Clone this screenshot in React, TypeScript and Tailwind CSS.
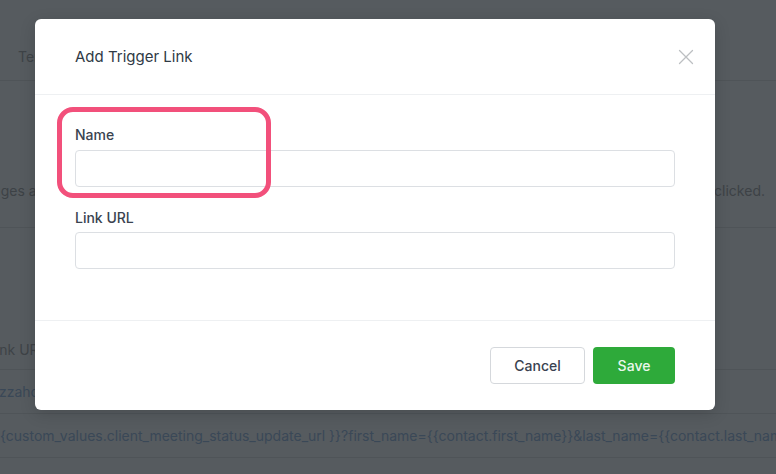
import { useState } from "react";

const linkRows = [
  { url: "pizzahouse.com/order", offset: "-ml-[13px]" },
  {
    url: "{custom_values.client_meeting_status_update_url }}?first_name={{contact.first_name}}&last_name={{contact.last_name}}",
    offset: "",
  },
];

function CloseIcon() {
  return (
    <svg width="16" height="16" viewBox="0 0 16 16" fill="none" stroke="currentColor" strokeWidth="1.3" strokeLinecap="round">
      <path d="M1.5 1.5 L14.5 14.5 M14.5 1.5 L1.5 14.5" />
    </svg>
  );
}

export default function App() {
  const [name, setName] = useState("");
  const [url, setUrl] = useState("");

  return (
    <div className="relative w-[776px] h-[474px] overflow-hidden bg-[#565b5f] font-['Inter',sans-serif] text-[#3e4347]">
      {/* Page behind the dialog (dimmed) */}
      <div className="flex flex-col h-full">
        <div className="h-[81px] border-b border-[#4f5458] flex items-end px-[18px] pb-[13px]">
          <span className="text-sm">Templates</span>
        </div>
        <div className="h-[147px] border-b border-[#4f5458] flex items-end justify-between pb-[26px] pr-[11px] -ml-[22px] text-sm text-[#3d4246]">
          <span>ssages and</span>
          <span>are clicked.</span>
        </div>
        <div className="mt-[102px] flex flex-col text-sm">
          <div className="h-[40px] border-b border-[#4f5458] flex items-center -ml-[12px]">
            <span>Link URL</span>
          </div>
          {linkRows.map((r) => (
            <div
              key={r.url}
              className="h-[44px] border-b border-[#4f5458] flex items-center whitespace-nowrap text-[#3a4857]"
            >
              <span className={r.offset}>{r.url}</span>
            </div>
          ))}
        </div>
      </div>

      {/* Dialog */}
      <div className="absolute left-[35px] top-[19px] w-[680px] bg-white rounded-[6px] shadow-[0_4px_16px_rgba(0,0,0,0.15)] flex flex-col">
        <div className="h-[76px] border-b border-[#eef0f2] flex items-center justify-between pl-10 pr-[14px]">
          <h2 className="text-[15px] text-[#2f3a45] pt-[2px]">Add Trigger Link</h2>
          <button className="w-[30px] h-[30px] flex items-center justify-center text-[#bcbfc2]">
            <CloseIcon />
          </button>
        </div>

        <div className="px-10 pt-[30px] pb-[51px] flex flex-col">
          <label className="text-sm leading-5 font-medium text-[#3a4350] mb-[5px]">Name</label>
          <input
            value={name}
            onChange={(e) => setName(e.target.value)}
            className="h-[37px] w-full rounded-[4px] border border-[#dcdfe3] px-3 text-sm outline-none"
          />
          <label className="text-sm leading-5 font-medium text-[#3a4350] mt-[21px] mb-[4px]">Link URL</label>
          <input
            value={url}
            onChange={(e) => setUrl(e.target.value)}
            className="h-[37px] w-full rounded-[4px] border border-[#dcdfe3] px-3 text-sm outline-none"
          />
        </div>

        <div className="border-t border-[#eef0f2] h-[90px] flex items-center justify-end gap-2 pr-10">
          <button className="w-[95px] h-[37px] rounded-[4px] border border-[#d5d8dc] text-sm font-medium text-[#3a4250] bg-white">
            Cancel
          </button>
          <button className="w-[82px] h-[37px] rounded-[4px] bg-[#2eaa3a] text-sm font-medium text-[#eaf7ec]">
            Save
          </button>
        </div>
      </div>

      {/* Highlight annotation */}
      <div className="absolute left-[57px] top-[107px] w-[214px] h-[91px] rounded-[16px] border-[5px] border-[#f2507b]" />
    </div>
  );
}
